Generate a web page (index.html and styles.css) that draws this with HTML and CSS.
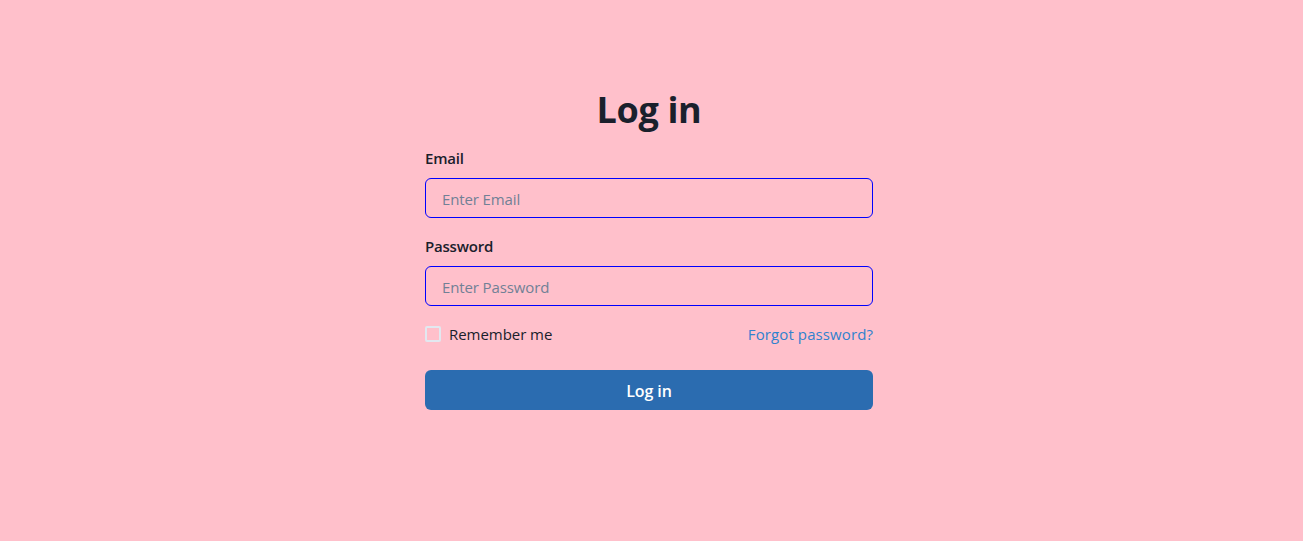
FILE: index.html
```html
<!DOCTYPE html>
<html lang="en">
<head>
<meta charset="utf-8">
<title>Log in</title>
<link rel="stylesheet" href="styles.css">
</head>
<body>
<main class="page">
<form class="login">
<h1 class="title">Log in</h1>
<label class="label" for="email">Email</label>
<input class="field" id="email" type="email" placeholder="Enter Email">
<label class="label" for="password">Password</label>
<input class="field" id="password" type="password" placeholder="Enter Password">
<div class="options">
<label class="remember"><input class="checkbox" type="checkbox">Remember me</label>
<a class="forgot" href="#">Forgot password?</a>
</div>
<button class="submit" type="button">Log in</button>
</form>
</main>
</body>
</html>
```

FILE: styles.css
```css
* { box-sizing: border-box; }
body { margin: 0; background: #ffc0cb; color: #1a202c; font: 15px/24px "Segoe UI", "Open Sans", "Noto Sans", sans-serif; }
.page { min-height: 541px; display: flex; justify-content: center; padding: 88px 5px 0 0; }
.login { width: 448px; display: flex; flex-direction: column; }
.title { margin: 0 0 15px; font-size: 36px; line-height: 44px; height: 43px; font-weight: 700; letter-spacing: -0.35px; text-align: center; }
.label { font-weight: 600; letter-spacing: -0.2px; margin-bottom: 8px; }
.field { width: 100%; height: 40px; margin: 0 0 16px; padding: 1px 16px 0; border: 1px solid #00f; border-radius: 6px; background: transparent; font: inherit; letter-spacing: -0.12px; color: inherit; outline: 0; }
.field::placeholder { color: #718096; opacity: 1; }
.options { display: flex; justify-content: space-between; height: 24px; }
.remember { display: flex; align-items: center; gap: 8px; letter-spacing: -0.05px; }
.checkbox { appearance: none; width: 16px; height: 16px; margin: 0; border: 2px solid #e2e8f0; border-radius: 2px; }
.forgot { color: #3182ce; text-decoration: none; letter-spacing: 0.1px; }
.submit { height: 40px; margin-top: 24px; padding: 2px 16px 0; border: 0; border-radius: 6px; background: #2b6cb0; color: #fff; font: inherit; font-size: 16px; font-weight: 600; letter-spacing: -0.1px; }
```
